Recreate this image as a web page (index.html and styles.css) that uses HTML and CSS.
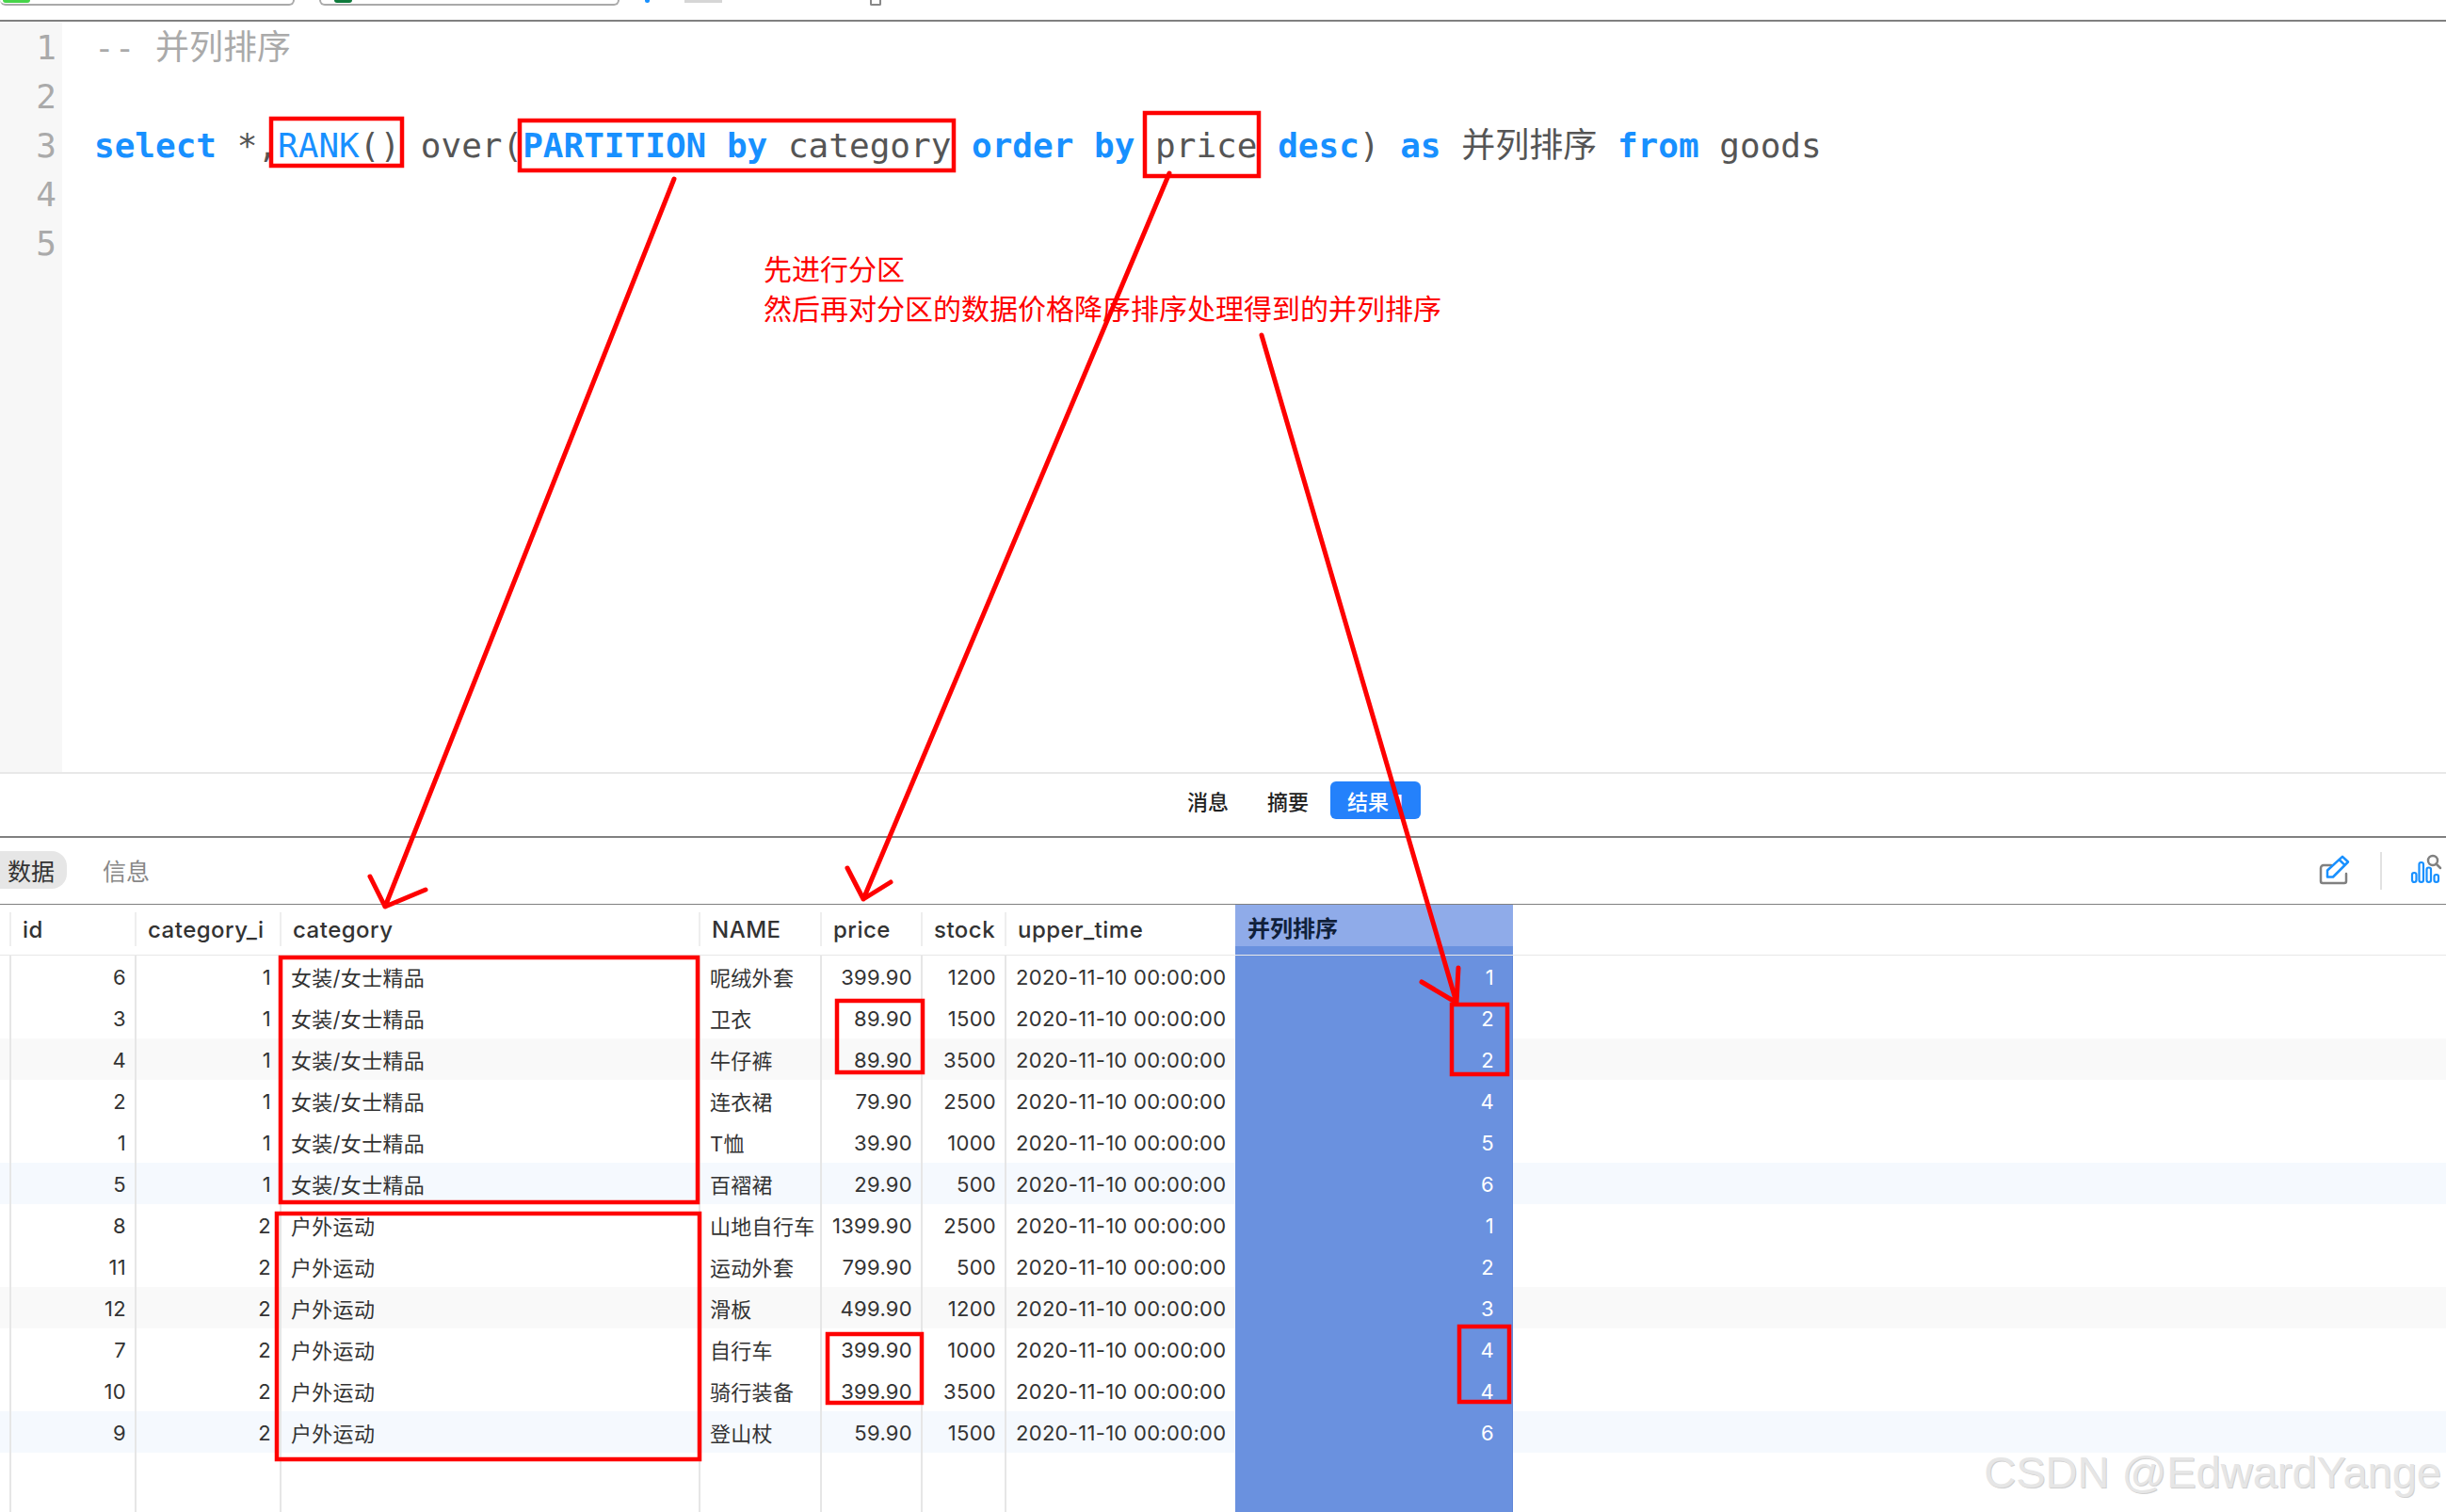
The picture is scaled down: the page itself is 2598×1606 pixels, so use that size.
FILE: index.html
```html
<!DOCTYPE html>
<html lang="zh">
<head>
<meta charset="utf-8">
<title>并列排序</title>
<link rel="stylesheet" href="styles.css">
</head>
<body>
<div class="app">
  <div class="tabstrip">
    <div class="pill pill-a"><span class="dot dot-a"></span></div>
    <div class="pill pill-b"><span class="dot dot-b"></span></div>
    <span class="mark mark-blue"></span>
    <span class="mark mark-gray"></span>
    <span class="mark mark-box"></span>
  </div>

  <div class="editor">
    <div class="gutter">
      <div class="ln">1</div><div class="ln">2</div><div class="ln">3</div><div class="ln">4</div><div class="ln">5</div>
    </div>
    <div class="code">
      <div class="ln cm">-- 并列排序</div>
      <div class="ln"></div>
      <div class="ln"><b>select</b> *,<i>RANK</i>() over(<b>PARTITION by</b> category <b>order by</b> price <b>desc</b>) <b>as</b> 并列排序 <b>from</b> goods</div>
      <div class="ln"></div>
      <div class="ln"></div>
    </div>
  </div>

  <div class="restabs">
    <span class="rt">消息</span>
    <span class="rt">摘要</span>
    <span class="rt rt-on">结果 1</span>
  </div>

  <div class="toolbar">
    <span class="tb tb-on">数据</span>
    <span class="tb">信息</span>
    <svg class="ic-edit" width="33" height="33" viewBox="0 0 33 33" fill="none">
      <path d="M13 11H5a3 3 0 0 0-3 3v14a2 2 0 0 0 2 2h23a2 2 0 0 0 2-2v-8" stroke="#808080" stroke-width="2.5" stroke-linecap="round"/>
      <path d="M9 23.500V16.500L25 1.800l6 5.700L15 23.500Z M21.500 5l6 5.800" stroke="#1890ff" stroke-width="2.500" stroke-linejoin="round"/>
    </svg>
    <span class="tb-div"></span>
    <svg class="ic-chart" width="34" height="32" viewBox="0 0 34 32" fill="none">
      <g stroke="#1890ff" stroke-width="2.200">
        <rect x="2" y="20" width="4.500" height="10" rx="2.200"/>
        <rect x="9.500" y="9" width="4.500" height="21" rx="2.200"/>
        <rect x="17.500" y="14.500" width="4.500" height="15.500" rx="2.200"/>
        <rect x="25.500" y="22" width="4.500" height="8" rx="2.200"/>
      </g>
      <circle cx="24" cy="7" r="5" stroke="#808080" stroke-width="2.500"/>
      <path d="M27.500 10.500l4.500 4.500" stroke="#808080" stroke-width="2.500" stroke-linecap="round"/>
    </svg>
  </div>

  <div class="grid">
    <div class="row head">
      <div></div>
      <div class="h">id</div><div class="h">category_i</div><div class="h">category</div><div class="h">NAME</div><div class="h">price</div><div class="h">stock</div><div class="h">upper_time</div><div class="h-rank">并列排序</div>
    </div>
    <div class="row"><div></div><div class="c n">6</div><div class="c n">1</div><div class="c cat">女装/女士精品</div><div class="c nm">呢绒外套</div><div class="c n">399.90</div><div class="c n">1200</div><div class="c dt">2020-11-10 00:00:00</div><div class="c rank">1</div></div>
    <div class="row"><div></div><div class="c n">3</div><div class="c n">1</div><div class="c cat">女装/女士精品</div><div class="c nm">卫衣</div><div class="c n">89.90</div><div class="c n">1500</div><div class="c dt">2020-11-10 00:00:00</div><div class="c rank">2</div></div>
    <div class="row gray"><div></div><div class="c n">4</div><div class="c n">1</div><div class="c cat">女装/女士精品</div><div class="c nm">牛仔裤</div><div class="c n">89.90</div><div class="c n">3500</div><div class="c dt">2020-11-10 00:00:00</div><div class="c rank">2</div></div>
    <div class="row"><div></div><div class="c n">2</div><div class="c n">1</div><div class="c cat">女装/女士精品</div><div class="c nm">连衣裙</div><div class="c n">79.90</div><div class="c n">2500</div><div class="c dt">2020-11-10 00:00:00</div><div class="c rank">4</div></div>
    <div class="row"><div></div><div class="c n">1</div><div class="c n">1</div><div class="c cat">女装/女士精品</div><div class="c nm">T恤</div><div class="c n">39.90</div><div class="c n">1000</div><div class="c dt">2020-11-10 00:00:00</div><div class="c rank">5</div></div>
    <div class="row tint"><div></div><div class="c n">5</div><div class="c n">1</div><div class="c cat">女装/女士精品</div><div class="c nm">百褶裙</div><div class="c n">29.90</div><div class="c n">500</div><div class="c dt">2020-11-10 00:00:00</div><div class="c rank">6</div></div>
    <div class="row"><div></div><div class="c n">8</div><div class="c n">2</div><div class="c cat">户外运动</div><div class="c nm">山地自行车</div><div class="c n">1399.90</div><div class="c n">2500</div><div class="c dt">2020-11-10 00:00:00</div><div class="c rank">1</div></div>
    <div class="row"><div></div><div class="c n">11</div><div class="c n">2</div><div class="c cat">户外运动</div><div class="c nm">运动外套</div><div class="c n">799.90</div><div class="c n">500</div><div class="c dt">2020-11-10 00:00:00</div><div class="c rank">2</div></div>
    <div class="row gray"><div></div><div class="c n">12</div><div class="c n">2</div><div class="c cat">户外运动</div><div class="c nm">滑板</div><div class="c n">499.90</div><div class="c n">1200</div><div class="c dt">2020-11-10 00:00:00</div><div class="c rank">3</div></div>
    <div class="row"><div></div><div class="c n">7</div><div class="c n">2</div><div class="c cat">户外运动</div><div class="c nm">自行车</div><div class="c n">399.90</div><div class="c n">1000</div><div class="c dt">2020-11-10 00:00:00</div><div class="c rank">4</div></div>
    <div class="row"><div></div><div class="c n">10</div><div class="c n">2</div><div class="c cat">户外运动</div><div class="c nm">骑行装备</div><div class="c n">399.90</div><div class="c n">3500</div><div class="c dt">2020-11-10 00:00:00</div><div class="c rank">4</div></div>
    <div class="row tint"><div></div><div class="c n">9</div><div class="c n">2</div><div class="c cat">户外运动</div><div class="c nm">登山杖</div><div class="c n">59.90</div><div class="c n">1500</div><div class="c dt">2020-11-10 00:00:00</div><div class="c rank">6</div></div>
    <div class="row filler"><div></div><div class="c"></div><div class="c"></div><div class="c"></div><div class="c"></div><div class="c"></div><div class="c"></div><div class="c"></div><div class="c rank"></div></div>
  </div>
</div>

<div class="note">先进行分区<br>然后再对分区的数据价格降序排序处理得到的并列排序</div>

<svg class="overlay" width="2598" height="1606" viewBox="0 0 2598 1606" fill="none">
  <g stroke="#fe0000" stroke-width="4.500">
    <rect x="288" y="126" width="139" height="50"/>
    <rect x="552" y="128" width="461" height="53"/>
    <rect x="1216" y="120" width="121" height="67"/>
    <rect x="298" y="1017" width="443" height="260"/>
    <rect x="294" y="1289" width="449" height="261"/>
    <rect x="889" y="1063" width="91" height="76"/>
    <rect x="1542" y="1067" width="59" height="74"/>
    <rect x="879" y="1417" width="100" height="73"/>
    <rect x="1550" y="1409" width="53" height="80"/>
  </g>
  <g stroke="#fe0000" stroke-width="5" stroke-linecap="round" stroke-linejoin="round">
    <path d="M716 190L409 963M393 931L409 963L452 945"/>
    <path d="M1242 184L917 955M900 922L917 955L946 937"/>
    <path d="M1340 356L1547 1065M1510 1043L1547 1065L1549 1028"/>
  </g>
</svg>

<div class="watermark">CSDN @EdwardYange</div>
</body>
</html>
```

FILE: styles.css
```css
* { box-sizing: border-box; }

html, body {
  margin: 0;
  padding: 0;
  width: 2598px;
  height: 1606px;
  overflow: hidden;
  background: #fff;
}

.app {
  display: flex;
  flex-direction: column;
  height: 1606px;
  font-family: Inter, "Noto Sans CJK SC", sans-serif;
  color: #333;
}

/* clipped window tabs at the top */
.tabstrip {
  flex: none;
  display: flex;
  align-items: flex-start;
  height: 23px;
  border-bottom: 2px solid #808080;
}
.pill {
  height: 6px;
  border: 2px solid #aaa;
  border-top: 0;
  border-radius: 0 0 10px 10px;
  position: relative;
}
.pill-a { width: 313px; border-left: 0; }
.pill-b { width: 319px; margin-left: 26px; }
.dot { position: absolute; top: 0; height: 3px; border-radius: 0 0 5px 5px; }
.dot-a { left: 3px; width: 29px; background: #47d44a; }
.dot-b { left: 14px; width: 19px; background: #0f7a3c; }
.mark { height: 3px; }
.mark-blue { width: 5px; margin-left: 27px; background: #1890ff; border-radius: 0 0 3px 3px; }
.mark-gray { width: 40px; margin-left: 37px; background: #d6d6d6; }
.mark-box { width: 12px; height: 6px; margin-left: 157px; border: 2px solid #888; border-top: 0; border-radius: 0 0 2px 2px; }

/* editor */
.editor {
  flex: none;
  display: flex;
  height: 799px;
  border-bottom: 2px solid #e8e8e8;
  font-family: "DejaVu Sans Mono", "Noto Sans CJK SC", monospace;
  font-size: 36px;
  line-height: 52px;
  color: #555;
}
.gutter {
  flex: none;
  width: 66px;
  padding: 2px 6px 0 0;
  background: #f7f7f7;
  color: #aaa;
  text-align: right;
}
.code {
  flex: 1;
  padding: 2px 0 0 34px;
}
.ln { height: 52px; white-space: pre; }
.cm { color: #aaa; }
.code b { font-weight: 700; color: #1890ff; }
.code i { font-style: normal; color: #1890ff; }

/* result tabs */
.restabs {
  flex: none;
  display: flex;
  align-items: center;
  gap: 41px;
  height: 68px;
  padding: 0 0 10px 1261px;
  border-bottom: 2px solid #808080;
  font-size: 22px;
  font-weight: 500;
  color: #222;
}
.rt-on {
  display: flex;
  align-items: center;
  width: 96px;
  height: 40px;
  margin-left: -18px;
  padding-left: 18px;
  border-radius: 6px;
  background: #2481fb;
  color: #fff;
  white-space: pre;
}

/* data toolbar */
.toolbar {
  flex: none;
  display: flex;
  align-items: center;
  height: 71px;
  padding-right: 4px;
  border-bottom: 1px solid #808080;
  font-size: 25px;
}
.tb {
  display: flex;
  align-items: center;
  height: 40px;
  color: #888;
  margin-left: 50px;
  margin-top: -2px;
}
.tb-on {
  width: 71px;
  margin-left: 0;
  padding-left: 8px;
  border-radius: 0 16px 16px 0;
  background: #e6e6e6;
  color: #333;
  margin-right: -12px;
}
.ic-edit { margin-left: auto; margin-top: -2px; }
.tb-div {
  width: 2px;
  height: 40px;
  margin: 0 30px 0 32px;
  background: #e2e2e2;
}
.ic-chart { margin-top: -4px; }

/* result grid */
.grid {
  flex: 1;
  display: flex;
  flex-direction: column;
  font-size: 22px;
  letter-spacing: 0.3px;
}
.row {
  flex: none;
  display: grid;
  grid-template-columns: 10px 133px 154px 445px 129px 107px 89px 245px 295px 1fr;
  height: 44px;
}
.gray { background: #f9f9f9; }
.tint { background: #f5f9fe; }
.filler { flex: 1; }

.head {
  height: 54px;
  border-bottom: 1px solid #e8e8e8;
  font-size: 24px;
  font-weight: 500;
  letter-spacing: 0.5px;
}
.h {
  display: flex;
  align-items: center;
  height: 36px;
  margin-top: 8px;
  padding-left: 12px;
  border-left: 2px solid #eee;
}
.h-rank {
  display: flex;
  align-items: flex-start;
  padding: 8px 0 0 13px;
  line-height: 36px;
  font-weight: 600;
  letter-spacing: 0;
  color: #10203a;
  background: linear-gradient(#8fabe9 44px, #6a91df 44px);
}

.c {
  display: flex;
  align-items: center;
  padding-left: 10px;
  border-left: 2px solid #e6e6e6;
  white-space: nowrap;
}
.cat, .nm { padding-bottom: 1px; }
.n, .dt, .rank { padding-top: 1px; }
.cat { padding-left: 10px; }
.n { justify-content: flex-end; padding-right: 9px; padding-left: 0; }
.rank {
  justify-content: flex-end;
  padding-right: 19px;
  border-left: 0;
  border-right: 1px solid #5f86d8;
  background: #6a91df;
  color: #fff;
}

/* annotations over the screenshot */
.note {
  position: absolute;
  left: 811px;
  top: 263px;
  font-family: "Noto Sans CJK SC", sans-serif;
  font-size: 30px;
  line-height: 42px;
  color: #fe0000;
}
.overlay {
  position: absolute;
  left: 0;
  top: 0;
  pointer-events: none;
}
.watermark {
  position: absolute;
  right: 5px;
  bottom: 14px;
  font-family: "Liberation Sans", sans-serif;
  font-size: 47px;
  line-height: 56px;
  color: #e6e6e6;
  text-shadow: 1px 1px 0 #d0d0d0;
}
```
